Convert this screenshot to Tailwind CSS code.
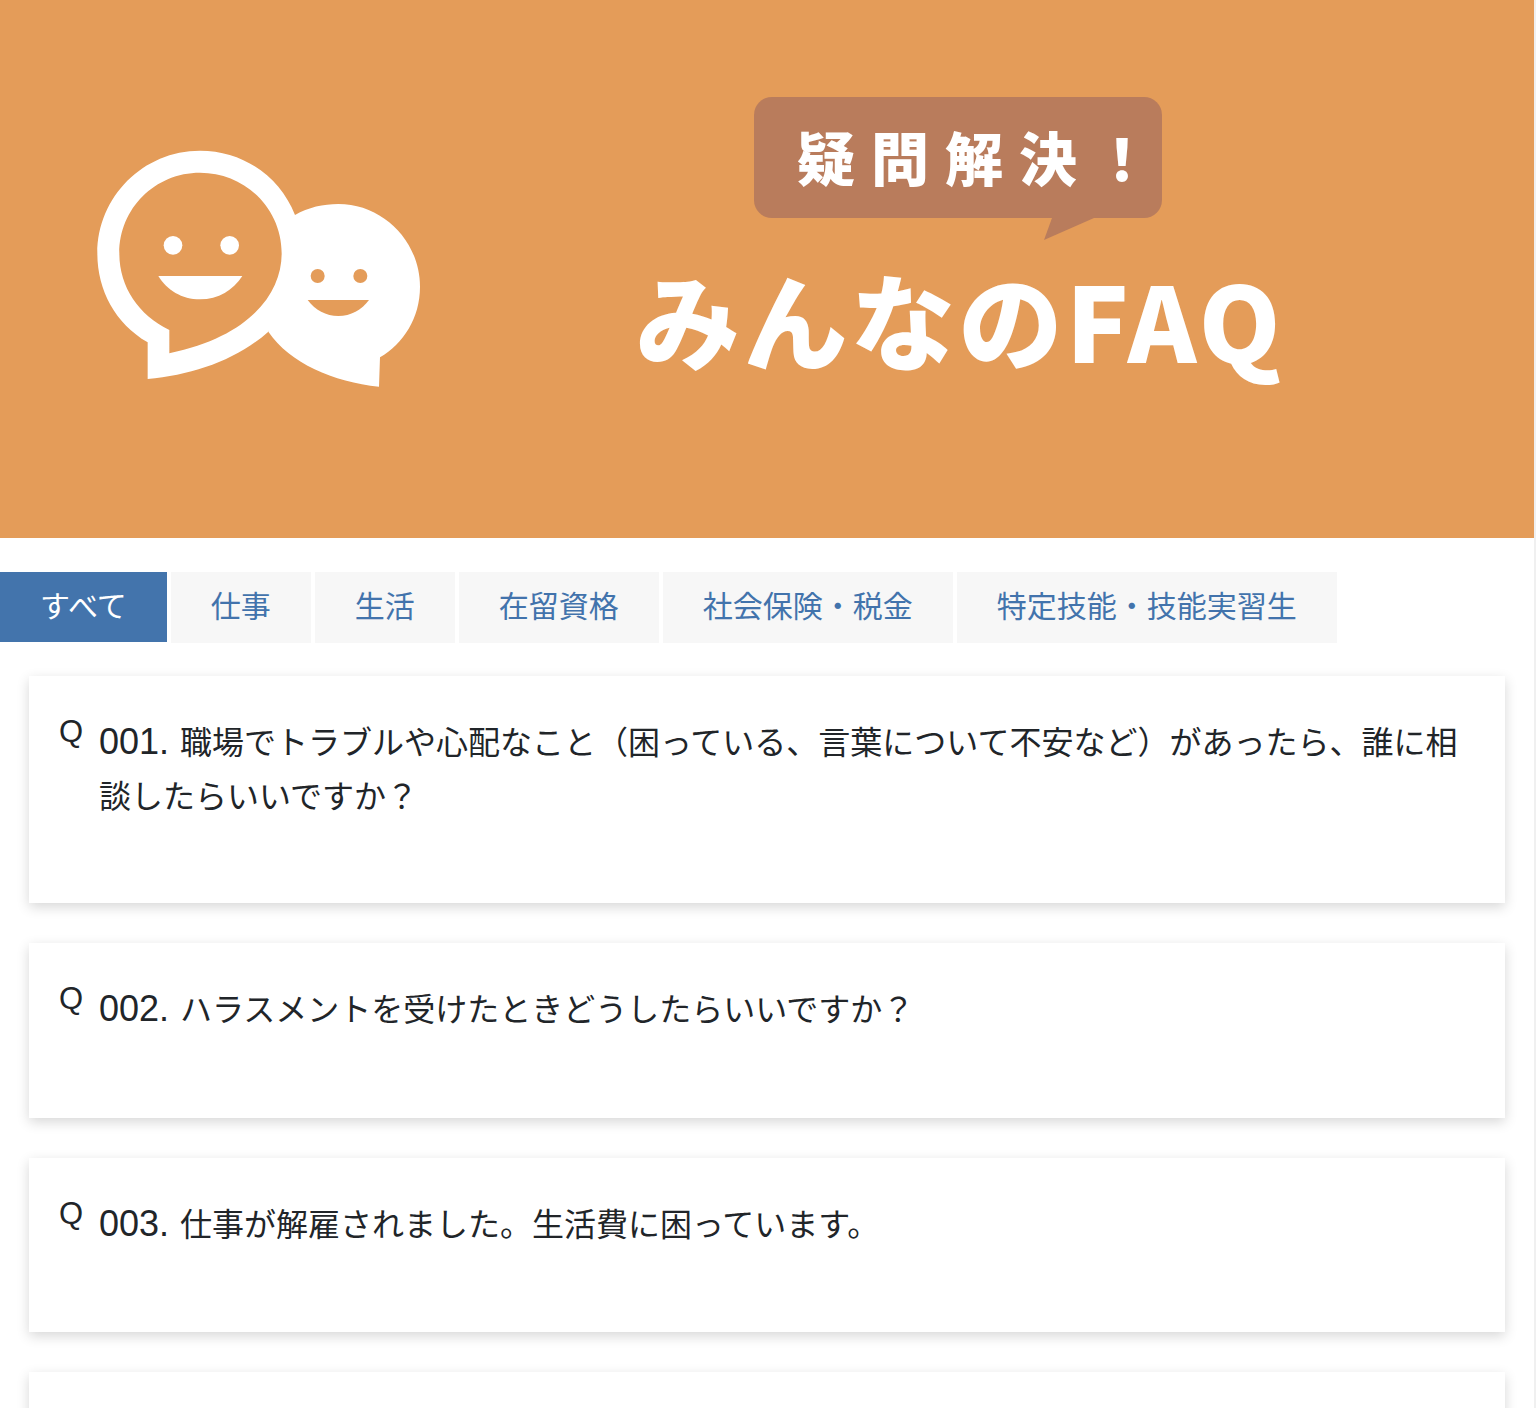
<!DOCTYPE html>
<html lang="ja">
<head>
    <meta charset="UTF-8">
    <title>みんなのFAQ</title>
    <script src="https://cdn.jsdelivr.net/npm/@tailwindcss/browser@4"></script>
</head>
<body class="h-screen overflow-hidden bg-white font-['Liberation_Sans','Noto_Sans_CJK_JP',sans-serif] text-[#212529]">
    <div class="w-[1536px] h-[1408px] overflow-hidden border-r-2 border-[#f0f0f0]">
        <!-- banner -->
        <header class="flex items-start h-[538px] bg-[#e49c59] text-white font-['Noto_Sans_CJK_JP',sans-serif]">
            <svg class="w-[360px] h-[270px] ml-[80px] mt-[130px] shrink-0" viewBox="0 0 1080 810">
                <path fill="#fff" d="M645 255C685 232 730 222 775 222C910 222 1020 335 1020 470C1020 565 970 640 900 682L897 770C760 755 630 700 565 605Z"/>
                <path fill="#fff" d="M203 637C105 580 52 480 52 370C52 200 190 62 360 62C490 62 600 140 645 255L680 400L565 605C470 690 340 735 203 747Z"/>
                <path fill="#e49c59" d="M268 600C175 555 118 470 118 370C118 235 225 128 360 128C495 128 605 235 605 370C605 490 510 620 268 670Z"/>
                <circle cx="279" cy="346" r="28" fill="#fff"/>
                <circle cx="449" cy="346" r="28" fill="#fff"/>
                <path fill="#fff" d="M235 438H487C460 480 415 508 360 508C305 508 260 480 235 438Z"/>
                <circle cx="713" cy="438" r="21" fill="#e49c59"/>
                <circle cx="841" cy="438" r="21" fill="#e49c59"/>
                <path fill="#e49c59" d="M683 510H867C845 540 812 558 775 558C738 558 705 540 683 510Z"/>
            </svg>
            <div class="flex flex-col items-center w-[660px] ml-[190px] pt-[97px]">
                <div class="relative flex items-center w-[408px] h-[121px] -ml-[4px] pl-[43px] pb-[4px] rounded-[18px] bg-[#b97c5c]">
                    <span class="text-[58px] leading-none font-black tracking-[16px] whitespace-nowrap">疑問解決！</span>
                    <svg class="absolute left-[290px] top-[121px] w-[50px] h-[22px]" viewBox="0 0 50 22">
                        <path fill="#b97c5c" d="M8 0L0 22L50 0Z"/>
                    </svg>
                </div>
                <p class="mt-[35px] text-[104px] leading-[130px] font-black tracking-[3.5px] whitespace-nowrap">みんなのFAQ</p>
            </div>
        </header>

        <!-- tabs -->
        <nav class="flex items-start gap-1 mt-[34px] text-[30px] leading-[70px] text-[#4273ac]">
            <a class="h-[70px] px-[40px] bg-[#4374ac] text-white">すべて</a>
            <a class="h-[71px] px-[40px] bg-[#f7f7f7]">仕事</a>
            <a class="h-[71px] px-[40px] bg-[#f7f7f7]">生活</a>
            <a class="h-[71px] px-[40px] bg-[#f7f7f7]">在留資格</a>
            <a class="h-[71px] px-[40px] bg-[#f7f7f7]">社会保険・税金</a>
            <a class="h-[71px] px-[40px] bg-[#f7f7f7]">特定技能・技能実習生</a>
        </nav>

        <!-- questions -->
        <main class="flex flex-col gap-[40px] w-[1476px] ml-[29px] mt-[33px]">
            <div class="flex h-[227px] pt-[39px] pl-[30px] pr-[30px] bg-white shadow-[0_4px_12px_rgba(0,0,0,0.16)]">
                <span class="w-[40px] shrink-0 text-[31px] leading-[33px]">Q</span>
                <p class="text-[32px] leading-[54px]"><span class="text-[36px] mr-[2px]">001.</span> 職場でトラブルや心配なこと（困っている、言葉について不安など）があったら、誰に相談したらいいですか？</p>
            </div>
            <div class="flex h-[175px] pt-[39px] pl-[30px] pr-[30px] bg-white shadow-[0_4px_12px_rgba(0,0,0,0.16)]">
                <span class="w-[40px] shrink-0 text-[31px] leading-[33px]">Q</span>
                <p class="text-[32px] leading-[54px]"><span class="text-[36px] mr-[2px]">002.</span> ハラスメントを受けたときどうしたらいいですか？</p>
            </div>
            <div class="flex h-[174px] pt-[39px] pl-[30px] pr-[30px] bg-white shadow-[0_4px_12px_rgba(0,0,0,0.16)]">
                <span class="w-[40px] shrink-0 text-[31px] leading-[33px]">Q</span>
                <p class="text-[32px] leading-[54px]"><span class="text-[36px] mr-[2px]">003.</span> 仕事が解雇されました。生活費に困っています。</p>
            </div>
            <div class="h-[174px] bg-white shadow-[0_4px_12px_rgba(0,0,0,0.16)]"></div>
        </main>
    </div>
</body>
</html>
